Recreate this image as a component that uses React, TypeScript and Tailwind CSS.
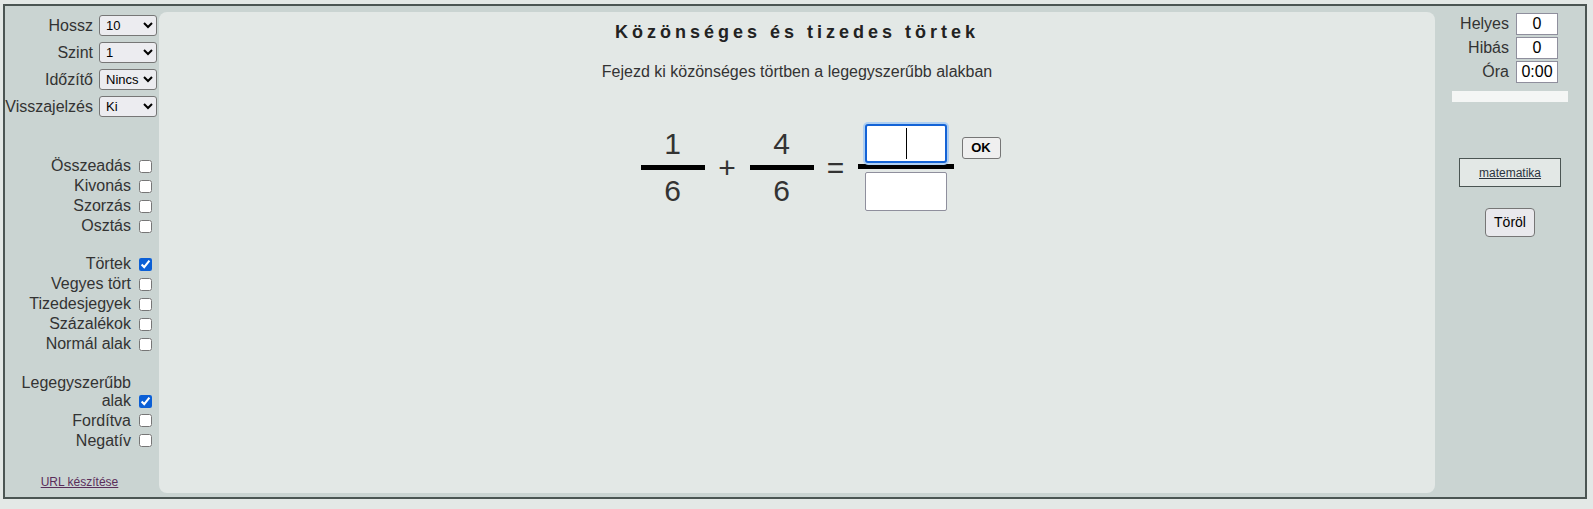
import { useState } from "react";

const selects = [
  { label: "Hossz", value: "10", options: ["5", "10", "20", "50"] },
  { label: "Szint", value: "1", options: ["1", "2", "3", "4"] },
  { label: "Időzítő", value: "Nincs", options: ["Nincs", "1 perc", "5 perc"] },
  { label: "Visszajelzés", value: "Ki", options: ["Ki", "Be"] },
];

const ops = ["Összeadás", "Kivonás", "Szorzás", "Osztás"];
const kinds = ["Törtek", "Vegyes tört", "Tizedesjegyek", "Százalékok", "Normál alak"];

function CheckRow({ label, checked }: { label: string; checked?: boolean }) {
  return (
    <label className="flex h-[20px] items-center justify-end">
      <span>{label}</span>
      <input type="checkbox" defaultChecked={checked} className="ml-[8px] h-[13px] w-[13px] accent-[#0b5fd6]" />
    </label>
  );
}

function Fraction({ top, bottom }: { top: string; bottom: string }) {
  return (
    <div className="flex flex-col items-center">
      <div className="text-[30px] leading-[32px]">{top}</div>
      <div className="my-[5px] h-[5px] w-[64px] bg-black" />
      <div className="text-[30px] leading-[32px]">{bottom}</div>
    </div>
  );
}

export default function App() {
  const [num, setNum] = useState("");
  const [den, setDen] = useState("");

  return (
    <div className="h-[509px] w-full bg-[#e3e8e6] pl-[3px] pt-[4px] font-['Liberation_Sans',Arial,sans-serif] text-[16px] text-[#333]">
      <div className="flex h-[495px] w-[1584px] border-2 border-[#4b5553] bg-[#cad4d2]">
        {/* left settings */}
        <div className="flex w-[154px] shrink-0 flex-col">
          <div className="flex flex-col gap-[6px] pr-[2px] pt-[9px]">
            {selects.map((s) => (
              <div key={s.label} className="flex h-[21px] items-center justify-end gap-[6px]">
                <span>{s.label}</span>
                <select
                  defaultValue={s.value}
                  className="h-[21px] w-[58px] rounded-[3px] border border-[#767676] bg-[#ececf0] pl-[2px] text-[13px] text-black"
                >
                  {s.options.map((o) => (
                    <option key={o}>{o}</option>
                  ))}
                </select>
              </div>
            ))}
          </div>

          <div className="mt-[39px] flex flex-col pr-[7px]">
            {ops.map((o) => (
              <CheckRow key={o} label={o} />
            ))}
          </div>

          <div className="mt-[18px] flex flex-col pr-[7px]">
            {kinds.map((k) => (
              <CheckRow key={k} label={k} checked={k === "Törtek"} />
            ))}
          </div>

          <div className="mt-[20px] flex flex-col pr-[7px]">
            <label className="flex items-end justify-end">
              <span className="w-[112px] text-right leading-[18.4px]">Legegyszerűbb alak</span>
              <input type="checkbox" defaultChecked className="mb-[3px] ml-[8px] h-[13px] w-[13px] accent-[#0b5fd6]" />
            </label>
            <CheckRow label="Fordítva" />
            <CheckRow label="Negatív" />
          </div>

          <div className="mt-[22px] flex justify-center pr-[5px]">
            <a href="#" className="text-[12px] text-[#5a2d5a] underline">
              URL készítése
            </a>
          </div>
        </div>

        {/* exercise panel */}
        <div className="mt-[6px] flex h-[481px] w-[1276px] shrink-0 flex-col items-center rounded-[8px] bg-[#e3e8e6] pt-[8px]">
          <h1 className="text-[18px] font-bold leading-[24px] tracking-[4px] text-[#222]">Közönséges és tizedes törtek</h1>
          <p className="mt-[18px] leading-[20px]">Fejezd ki közönséges törtben a legegyszerűbb alakban</p>

          <div className="mt-[42px] grid w-full grid-cols-[1fr_auto_1fr]">
            <div />
            <div className="flex items-center">
              <Fraction top="1" bottom="6" />
              <span className="w-[45px] text-center text-[30px]">+</span>
              <Fraction top="4" bottom="6" />
              <span className="w-[44px] text-center text-[30px]">=</span>
              <div className="flex flex-col items-center">
                <div className="relative mb-[1px]">
                  <input
                    autoFocus
                    value={num}
                    onChange={(e) => setNum(e.target.value)}
                    className="block h-[39px] w-[82px] rounded-[3px] border-2 border-[#1463d6] bg-white text-center text-[28px] caret-transparent shadow-[0_0_0_2px_#aecff2] outline-none"
                  />
                  {num === "" && (
                    <span className="pointer-events-none absolute left-[41px] top-[4px] h-[31px] w-[1px] bg-black" />
                  )}
                </div>
                <div className="h-[5px] w-[96px] bg-black" />
                <input
                  value={den}
                  onChange={(e) => setDen(e.target.value)}
                  className="mt-[3px] h-[39px] w-[82px] rounded-[2px] border border-[#8f8f9d] bg-white text-center text-[28px] outline-none"
                />
              </div>
            </div>
            <div className="flex items-start">
              <button className="ml-[8px] mt-[13px] h-[22px] w-[39px] rounded-[3px] border border-[#767676] bg-[#efefef] text-[13px] font-bold text-black">
                OK
              </button>
            </div>
          </div>
        </div>

        {/* score */}
        <div className="flex w-[150px] shrink-0 flex-col items-center pt-[7px]">
          <div className="flex w-full flex-col gap-[2px] pr-[27px]">
            {[
              ["Helyes", "0"],
              ["Hibás", "0"],
              ["Óra", "0:00"],
            ].map(([l, v]) => (
              <div key={l} className="flex h-[22px] items-center justify-end gap-[7px]">
                <span>{l}</span>
                <input
                  readOnly
                  value={v}
                  className="h-[22px] w-[42px] border border-[#8f8f9d] bg-white text-center text-[16px] text-black"
                />
              </div>
            ))}
          </div>
          <div className="mt-[8px] h-[11px] w-[116px] bg-[#f4f6f5]" />
          <div className="mt-[56px] flex h-[29px] w-[102px] items-center justify-center border border-[#4b5553] bg-[#e3e8e6]">
            <a href="#" className="text-[12px] text-[#2b3440] underline">
              matematika
            </a>
          </div>
          <button className="mt-[21px] h-[29px] w-[50px] rounded-[4px] border border-[#767676] bg-[#e9e9ed] text-[14px] text-black">
            Töröl
          </button>
        </div>
      </div>
    </div>
  );
}
